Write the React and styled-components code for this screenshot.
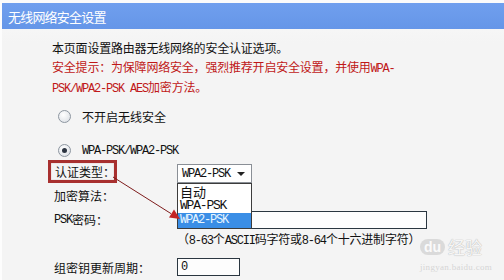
import React from "react";
import styled, { createGlobalStyle } from "styled-components";

const GlobalStyle = createGlobalStyle`
  html, body {
    margin: 0;
    padding: 0;
    background: #f4f4f4;
    overflow: hidden;
  }
  body {
    font-family: "Noto Sans CJK SC", "Liberation Mono", sans-serif;
    font-size: 12px;
    color: #111;
  }
`;

export default function App() {
  return (
    <>
      <GlobalStyle />
      <Frame>
        <Header>无线网络安全设置</Header>
        <Intro>
          <Line>本页面设置路由器无线网络的安全认证选项。</Line>
          <Line $warn>
            安全提示：为保障网络安全，强烈推荐开启安全设置，并使用<Lat>WPA-</Lat>
          </Line>
          <Line $warn>
            <Lat>PSK/WPA2-PSK AES</Lat>加密方法。
          </Line>
        </Intro>

        <RadioRow $top={8}>
          <Radio />
          <span>不开启无线安全</span>
        </RadioRow>
        <RadioRow $top={14}>
          <Radio $checked />
          <Lat>WPA-PSK/WPA2-PSK</Lat>
        </RadioRow>

        <FormRow $h={22}>
          <Label>
            <Mark>认证类型：</Mark>
          </Label>
          <Select>
            <Lat>WPA2-PSK</Lat>
            <Caret />
            <Options>
              <Option>自动</Option>
              <Option>
                <Lat>WPA-PSK</Lat>
              </Option>
              <Option $active>
                <Lat>WPA2-PSK</Lat>
              </Option>
            </Options>
          </Select>
        </FormRow>
        <FormRow $h={25}>
          <Label>加密算法：</Label>
        </FormRow>
        <FormRow $h={24}>
          <Label>
            <Lat>PSK</Lat>密码：
          </Label>
          <Input $w={250} />
        </FormRow>
        <FormRow $h={15}>
          <Label />
          <Hint>
            （<Lat>8-63</Lat>个<Lat>ASCII</Lat>码字符或<Lat>8-64</Lat>个十六进制字符）
          </Hint>
        </FormRow>
        <FormRow $h={19} $top={11}>
          <Label>组密钥更新周期：</Label>
          <Input $w={63}>
            <Lat>0</Lat>
          </Input>
        </FormRow>

        <Watermark>
          <Badge>du</Badge>
          <span>经验</span>
          <Site>jingyan.baidu.com</Site>
        </Watermark>

        <Arrow width="504" height="280" viewBox="0 0 504 280">
          <line x1="113" y1="177" x2="171" y2="213.6" stroke="#7e1c1c" strokeWidth="1" />
          <polygon points="180,219 169,217.5 174,209.5" fill="#c42424" />
        </Arrow>
      </Frame>
    </>
  );
}

const Frame = styled.div`
  position: relative;
  width: 504px;
  height: 280px;
  overflow: hidden;
  box-sizing: border-box;
  border-top: 3px solid #fbfbfb;
  border-left: 2px solid #fdfdfd;
  background: linear-gradient(#fafafa 0px, #f4f4f4 40px);
`;

const Header = styled.div`
  height: 26px;
  display: flex;
  align-items: center;
  padding-left: 6px;
  background: linear-gradient(#709fee, #6596e8);
  color: #fff;
  font-size: 13px;
  letter-spacing: -0.8px;
  margin-right: -2px;
`;

const Intro = styled.div`
  padding: 10px 0 0 50px;
  line-height: 18.5px;
`;

const Line = styled.div`
  white-space: nowrap;
  color: ${(p) => (p.$warn ? "#c01818" : "#111")};
  letter-spacing: -0.2px;
`;

const Lat = styled.span`
  font-family: "Liberation Mono", monospace;
  letter-spacing: -1.2px;
`;

const RadioRow = styled.div`
  height: 20px;
  margin-top: ${(p) => p.$top}px;
  display: flex;
  align-items: center;
  gap: 11px;
  padding-left: 56px;
  white-space: nowrap;
`;

const Radio = styled.span`
  position: relative;
  width: 11px;
  height: 11px;
  border-radius: 50%;
  border: 1px solid #8d96a0;
  background: radial-gradient(circle at 40% 35%, #ffffff, #d8dce2);
  flex: none;

  &::after {
    content: "";
    display: ${(p) => (p.$checked ? "block" : "none")};
    position: absolute;
    left: 3px;
    top: 3px;
    width: 5px;
    height: 5px;
    border-radius: 50%;
    background: #2c3440;
  }
`;

const FormRow = styled.div`
  height: ${(p) => p.$h}px;
  margin-top: ${(p) => p.$top || 0}px;
  display: flex;
  align-items: center;
  padding-left: 52px;
`;

const Label = styled.div`
  width: 123px;
  flex: none;
  white-space: nowrap;
  display: flex;
  align-items: center;
`;

const Mark = styled.span`
  display: inline-flex;
  align-items: center;
  box-sizing: border-box;
  width: 69px;
  height: 23px;
  margin-left: -6px;
  padding-left: 4px;
  border: 3px solid #a8302f;
  box-shadow: inset 0 0 1px rgba(120, 0, 0, 0.5);
`;

const Select = styled.div`
  position: relative;
  box-sizing: border-box;
  width: 75px;
  height: 19px;
  margin-top: 4px;
  border: 1px solid #8a8f96;
  background: #fff;
  display: flex;
  align-items: center;
  padding-left: 4px;
`;

const Caret = styled.span`
  position: absolute;
  right: 6px;
  top: 7px;
  border-left: 4px solid transparent;
  border-right: 4px solid transparent;
  border-top: 4px solid #222;
`;

const Options = styled.div`
  position: absolute;
  z-index: 2;
  left: -1px;
  top: 18px;
  box-sizing: border-box;
  width: 75px;
  height: 46px;
  border: 1px solid #3c3c3c;
  background: #fff;
`;

const Option = styled.div`
  height: 14.5px;
  display: flex;
  align-items: center;
  padding-left: 2px;
  background: ${(p) => (p.$active ? "#3a8ee6" : "transparent")};
  color: ${(p) => (p.$active ? "#e8f6ff" : "#111")};
  font-size: ${(p) => (p.$active ? 12 : 13)}px;
`;

const Input = styled.div`
  box-sizing: border-box;
  width: ${(p) => p.$w}px;
  height: 18px;
  border: 1px solid #2a3640;
  background: #fdfdfd;
  display: flex;
  align-items: center;
  padding-left: 3px;
`;

const Hint = styled.div`
  white-space: nowrap;
  letter-spacing: -0.2px;
`;

const Watermark = styled.div`
  position: absolute;
  left: 418px;
  top: 231px;
  width: 80px;
  display: flex;
  flex-wrap: wrap;
  align-items: center;
  gap: 3px;
  color: rgba(255, 255, 255, 0.9);
  font-size: 17px;
  text-shadow: 0 0 1px #b8b8b8, 0 0 1px #b8b8b8;
  pointer-events: none;
`;

const Badge = styled.span`
  font-family: "Liberation Sans", sans-serif;
  font-weight: bold;
  font-size: 14px;
  padding: 0 4px;
  border-radius: 9px;
  background: rgba(200, 200, 200, 0.6);
  text-shadow: none;
`;

const Site = styled.span`
  width: 100%;
  font-family: "Liberation Serif", serif;
  font-size: 9px;
  color: rgba(205, 205, 205, 0.8);
  text-shadow: none;
  letter-spacing: 0.3px;
`;

const Arrow = styled.svg`
  position: absolute;
  left: -2px;
  top: -3px;
  pointer-events: none;
  z-index: 3;
`;
